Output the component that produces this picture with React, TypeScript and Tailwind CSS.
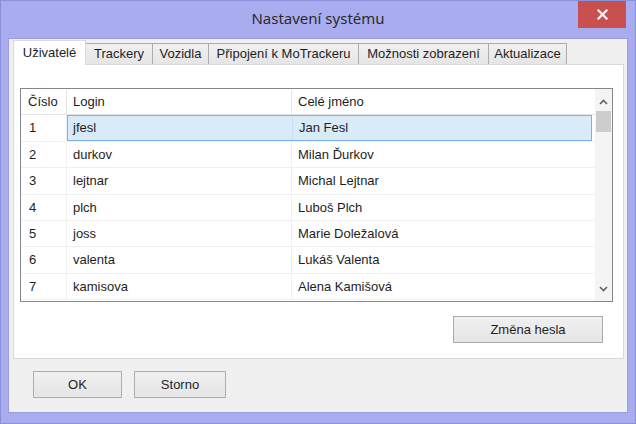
import React from "react";

const rows: [string, string, string][] = [
  ["1", "jfesl", "Jan Fesl"],
  ["2", "durkov", "Milan Ďurkov"],
  ["3", "lejtnar", "Michal Lejtnar"],
  ["4", "plch", "Luboš Plch"],
  ["5", "joss", "Marie Doležalová"],
  ["6", "valenta", "Lukáš Valenta"],
  ["7", "kamisova", "Alena Kamišová"],
];
const rowH = ["h-[27px]", "h-[26px]", "h-[27px]", "h-[26px]", "h-[26px]", "h-[27px]", "h-[26px]"];

const tabs: { label: string; w: string }[] = [
  { label: "Trackery", w: "w-[67px]" },
  { label: "Vozidla", w: "w-[57px]" },
  { label: "Připojení k MoTrackeru", w: "w-[151px]" },
  { label: "Možnosti zobrazení", w: "w-[131px]" },
  { label: "Aktualizace", w: "w-[79px]" },
];

export default function App() {
  return (
    <div
      className="w-[636px] h-[424px] bg-[#a9adf0] border border-[#8c90d8] flex flex-col relative text-[#1e1e1e]"
      style={{ fontFamily: '"Liberation Sans", Arial, sans-serif' }}
    >
      {/* title bar */}
      <div
        className="h-[37px] flex items-center justify-center text-[15px] text-[#2a2a2a] pb-[2px]"
        style={{ fontFamily: '"Noto Sans", "Open Sans", sans-serif' }}
      >
        Nastavení systému
      </div>
      <div className="absolute top-0 right-[9px] w-[48px] h-[27px] bg-[#c8504e] flex items-center justify-center">
        <svg width="11" height="11" viewBox="0 0 11 11">
          <path d="M1.5 1.5 L9.5 9.5 M9.5 1.5 L1.5 9.5" stroke="#ffffff" strokeWidth="2.2" strokeLinecap="square" />
        </svg>
      </div>

      {/* client */}
      <div className="mx-[7px] mb-[10px] flex-1 bg-[#f0f0f0] flex flex-col border border-[#9a9edf]">
        <div className="pl-[4px] pr-[3px] pt-[1px] flex flex-col">
          {/* tabs */}
          <div className="h-[24px] flex items-end text-[13px] relative z-10">
            <div className="w-[73px] bg-white border border-b-0 border-[#d9d9d9] flex items-center justify-center pb-[1px] mb-[-1px] h-[25px]">
              Uživatelé
            </div>
            {tabs.map((t, i) => (
              <div
                key={t.label}
                className={`${t.w} h-[21px] border border-b-0 border-[#acacac] bg-gradient-to-b from-[#f0f0f0] to-[#e5e5e5] flex items-center justify-center ${i === 0 ? "border-l-0" : "ml-[-1px]"}`}
              >
                {t.label}
              </div>
            ))}
          </div>
          {/* pane */}
          <div className="h-[295px] bg-white border border-[#d9d9d9] pl-[6px] pr-[10px] pt-[23px] flex flex-col">
            <div className="h-[214px] border border-[#828790] flex text-[13px]">
              <div className="flex-1 flex flex-col">
                {/* header */}
                <div className="h-[26px] flex border-b border-[#e5e5e5] pt-[1px]">
                  <div className="w-[46px] pl-[7px] flex items-center border-r border-[#e5e5e5]">Číslo</div>
                  <div className="w-[225px] pl-[6px] flex items-center border-r border-[#e5e5e5]">Login</div>
                  <div className="flex-1 pl-[6px] flex items-center">Celé jméno</div>
                </div>
                {rows.map((r, i) => (
                  <div key={r[0]} className={`${rowH[i]} flex border-b border-[#f0f0f0]`}>
                    <div className="w-[46px] pl-[8px] flex items-center border-r border-[#f0f0f0]">{r[0]}</div>
                    {i === 0 ? (
                      <div className="flex-1 flex bg-[#d9eaf9] border border-[#7db3e6] mr-[3px]">
                        <div className="w-[225px] pl-[5px] flex items-center border-r border-[#c7dff5]">{r[1]}</div>
                        <div className="flex-1 pl-[6px] flex items-center">{r[2]}</div>
                      </div>
                    ) : (
                      <>
                        <div className="w-[225px] pl-[6px] flex items-center border-r border-[#f0f0f0]">{r[1]}</div>
                        <div className="flex-1 pl-[6px] flex items-center">{r[2]}</div>
                      </>
                    )}
                  </div>
                ))}
              </div>
              {/* scrollbar */}
              <div className="w-[17px] bg-[#f4f4f4] flex flex-col items-center">
                <div className="h-[22px] flex items-center justify-center pt-[3px]">
                  <svg width="9" height="6" viewBox="0 0 9 6">
                    <path d="M1 5 L4.5 1.5 L8 5" stroke="#606060" strokeWidth="1.6" fill="none" />
                  </svg>
                </div>
                <div className="w-[15px] h-[21px] bg-[#cdcdcd]" />
                <div className="flex-1" />
                <div className="h-[22px] flex items-center justify-center pb-[2px]">
                  <svg width="9" height="6" viewBox="0 0 9 6">
                    <path d="M1 1 L4.5 4.5 L8 1" stroke="#606060" strokeWidth="1.6" fill="none" />
                  </svg>
                </div>
              </div>
            </div>
            <div className="flex justify-end pr-[10px] mt-[14px]">
              <div className="w-[150px] h-[27px] border border-[#acacac] bg-gradient-to-b from-[#f0f0f0] to-[#e5e5e5] flex items-center justify-center text-[13px]">
                Změna hesla
              </div>
            </div>
          </div>
        </div>
        {/* bottom buttons */}
        <div className="flex gap-[12px] pl-[24px] pt-[12px] text-[13px]">
          <div className="w-[89px] h-[27px] border border-[#acacac] bg-gradient-to-b from-[#f0f0f0] to-[#e5e5e5] flex items-center justify-center">
            OK
          </div>
          <div className="w-[92px] h-[27px] border border-[#acacac] bg-gradient-to-b from-[#f0f0f0] to-[#e5e5e5] flex items-center justify-center">
            Storno
          </div>
        </div>
      </div>
    </div>
  );
}
